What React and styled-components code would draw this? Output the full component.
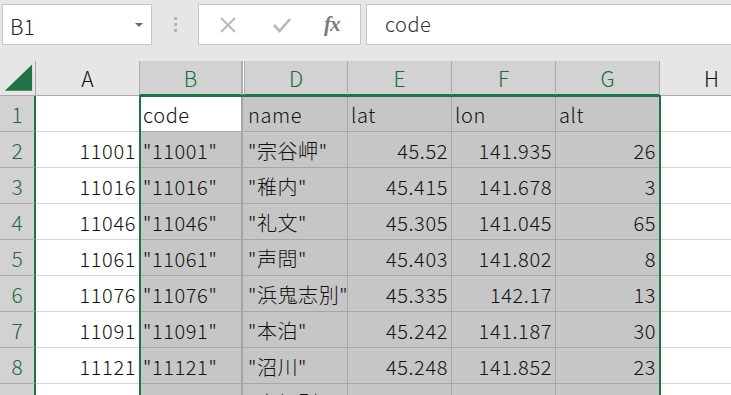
import React from 'react';
import styled, { createGlobalStyle } from 'styled-components';

const GlobalStyle = createGlobalStyle`
  html, body {
    margin: 0;
    padding: 0;
    background: #e6e6e6;
    overflow: hidden;
  }
  body {
    font-family: "Noto Sans CJK JP", "Noto Sans", sans-serif;
    font-weight: 300;
  }
`;

const GREEN = '#217346';

const columns = [
  { key: 'A', width: 104, selected: false },
  { key: 'B', width: 102, selected: true },
  { key: 'C', width: 3, selected: true, hidden: true },
  { key: 'D', width: 103, selected: true },
  { key: 'E', width: 104, selected: true },
  { key: 'F', width: 104, selected: true },
  { key: 'G', width: 104, selected: true },
  { key: 'H', width: 104, selected: false },
];

const rows = [
  ['', 'code', 'name', 'lat', 'lon', 'alt'],
  ['11001', '"11001"', '"宗谷岬"', '45.52', '141.935', '26'],
  ['11016', '"11016"', '"稚内"', '45.415', '141.678', '3'],
  ['11046', '"11046"', '"礼文"', '45.305', '141.045', '65'],
  ['11061', '"11061"', '"声問"', '45.403', '141.802', '8'],
  ['11076', '"11076"', '"浜鬼志別"', '45.335', '142.17', '13'],
  ['11091', '"11091"', '"本泊"', '45.242', '141.187', '30'],
  ['11121', '"11121"', '"沼川"', '45.248', '141.852', '23'],
  ['11151', '"11151"', '"中頓別"', '45.178', '141.139', '14'],
];

export default function App() {
  const template = '36px ' + columns.map((c) => c.width + 'px').join(' ');
  return (
    <Page>
      <GlobalStyle />
      <Toolbar>
        <NameBox>
          <span>B1</span>
          <DropArrow />
        </NameBox>
        <Grip>
          <i /><i /><i />
        </Grip>
        <FormulaButtons>
          <ToolIcon viewBox="0 0 20 20">
            <path d="M3 3 L17 17 M17 3 L3 17" stroke="#b9b9b9" strokeWidth="2" fill="none" />
          </ToolIcon>
          <ToolIcon viewBox="0 0 20 20">
            <path d="M2 10 L7.5 16 L18 4" stroke="#b9b9b9" strokeWidth="2.6" fill="none" />
          </ToolIcon>
          <Fx>fx</Fx>
        </FormulaButtons>
        <FormulaInput>code</FormulaInput>
      </Toolbar>

      <Sheet style={{ gridTemplateColumns: template }}>
        <Corner>
          <svg width="36" height="35" viewBox="0 0 36 35">
            <polygon points="5,31 33,31 33,4" fill={GREEN} />
          </svg>
        </Corner>
        {columns.map((c) =>
          c.hidden ? (
            <HiddenHeader key={c.key} />
          ) : (
            <ColHeader key={c.key} $selected={c.selected}>
              {c.key}
            </ColHeader>
          )
        )}

        {rows.map((r, i) => {
          const numeric = i > 0;
          const values = [r[0], r[1], null, r[2], r[3], r[4], r[5], ''];
          return (
            <React.Fragment key={i}>
              <RowHeader>{i + 1}</RowHeader>
              {values.map((v, j) => {
                const col = columns[j];
                if (col.hidden) return <HiddenCell key={j} />;
                const right = numeric && (j === 0 || j >= 4) && j !== 7;
                return (
                  <Cell
                    key={j}
                    $selected={col.selected}
                    $active={i === 0 && j === 1}
                    $right={right}
                  >
                    {v}
                  </Cell>
                );
              })}
            </React.Fragment>
          );
        })}

        <Selection />
      </Sheet>
    </Page>
  );
}

const Page = styled.div`
  width: 731px;
  height: 395px;
  overflow: hidden;
  background: #e6e6e6;
`;

const Toolbar = styled.div`
  display: flex;
  height: 49px;
  padding: 4px 0 0 2px;
  box-sizing: border-box;
  align-items: flex-start;
`;

const WhiteBox = styled.div`
  height: 41px;
  box-sizing: border-box;
  background: #ffffff;
  border: 1px solid #c6c6c6;
  display: flex;
  align-items: center;
`;

const NameBox = styled(WhiteBox)`
  width: 150px;
  padding: 0 0 0 7px;
  justify-content: space-between;
  font-size: 21px;
  color: #222;
  span {
    margin-top: 2px;
  }
`;

const DropArrow = styled.div`
  width: 0;
  height: 0;
  margin-right: 8px;
  border-left: 4px solid transparent;
  border-right: 4px solid transparent;
  border-top: 4px solid #6a6a6a;
`;

const Grip = styled.div`
  width: 46px;
  height: 41px;
  display: flex;
  flex-direction: column;
  align-items: center;
  justify-content: center;
  gap: 3px;
  i {
    display: block;
    width: 3px;
    height: 3px;
    background: #b3b3b3;
  }
`;

const FormulaButtons = styled(WhiteBox)`
  width: 163px;
  padding: 0 0 0 19px;
  gap: 34px;
`;

const ToolIcon = styled.svg`
  width: 20px;
  height: 20px;
`;

const Fx = styled.span`
  font-family: "Liberation Serif", serif;
  font-style: italic;
  font-weight: bold;
  font-size: 21px;
  color: #7a7a7a;
  margin-left: -2px;
  letter-spacing: -1px;
`;

const FormulaInput = styled(WhiteBox)`
  flex: 1;
  margin-left: 5px;
  padding-left: 18px;
  font-size: 20px;
  color: #333;
  border-right: none;
  padding-bottom: 2px;
  letter-spacing: 0.5px;
`;

const Sheet = styled.div`
  position: relative;
  display: grid;
  grid-auto-rows: 36px;
  grid-template-rows: 35px;
  margin-top: 12px;
  font-size: 20px;
  color: #111;
`;

const HeaderBase = styled.div`
  box-sizing: border-box;
  display: flex;
  align-items: center;
  justify-content: center;
  line-height: 1;
  white-space: nowrap;
  overflow: hidden;
`;

const Corner = styled(HeaderBase)`
  background: #e6e6e6;
  border-right: 1px solid #ababab;
  border-bottom: 1px solid #ababab;
  align-items: flex-end;
  justify-content: flex-start;
  svg {
    display: block;
  }
`;

const ColHeader = styled(HeaderBase)`
  background: ${(p) => (p.$selected ? '#d2d2d2' : '#e6e6e6')};
  color: ${(p) => (p.$selected ? '#1d6b40' : '#111')};
  border-right: 1px solid #ababab;
  border-bottom: ${(p) => (p.$selected ? `2px solid ${GREEN}` : '1px solid #ababab')};
  padding-top: ${(p) => (p.$selected ? '1px' : '0')};
  font-size: 21px;
`;

const HiddenHeader = styled.div`
  background: #ffffff;
  border-left: 1px solid #ababab;
  border-right: 1px solid #ababab;
  border-bottom: 2px solid ${GREEN};
  box-sizing: border-box;
`;

const RowHeader = styled(HeaderBase)`
  background: #d2d2d2;
  color: #1d6b40;
  border-right: 2px solid ${GREEN};
  border-bottom: 1px solid #ababab;
  padding-top: 2px;
  font-size: 21px;
`;

const Cell = styled.div`
  box-sizing: border-box;
  background: ${(p) => (p.$active ? '#ffffff' : p.$selected ? '#c6c6c6' : '#ffffff')};
  border-right: 1px solid ${(p) => (p.$selected ? '#a6a6a6' : '#d4d4d4')};
  border-bottom: 1px solid ${(p) => (p.$selected ? '#a6a6a6' : '#d4d4d4')};
  display: flex;
  align-items: center;
  justify-content: ${(p) => (p.$right ? 'flex-end' : 'flex-start')};
  padding: 3px 3px 0 3px;
  line-height: 1;
  letter-spacing: 0.6px;
  white-space: nowrap;
  overflow: hidden;
`;

const HiddenCell = styled.div`
  background: #c6c6c6;
  border-left: 1px solid #a6a6a6;
  border-bottom: 1px solid #a6a6a6;
  box-sizing: border-box;
`;

const Selection = styled.div`
  position: absolute;
  left: 139px;
  top: 34px;
  width: 522px;
  height: 400px;
  border: 2px solid ${GREEN};
  box-sizing: border-box;
  pointer-events: none;
`;
